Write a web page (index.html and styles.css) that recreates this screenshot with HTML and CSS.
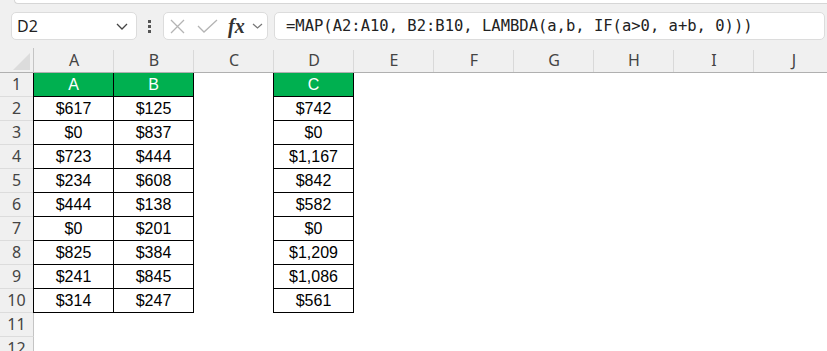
FILE: index.html
```html
<!doctype html>
<html>
<head>
    <meta charset="utf-8">
    <title>MAP LAMBDA</title>
    <link rel="stylesheet" href="styles.css">
</head>
<body>

    <div class="chrome">
        <div class="ribbon-edge"></div>
        <div class="fbar">
            <div class="namebox">
                <span>D2</span>
                <svg width="12" height="7" viewBox="0 0 12 7"><polyline points="1,1 6,6 11,1" fill="none" stroke="#444" stroke-width="1.3"/></svg>
            </div>
            <div class="kebab"><i></i><i></i><i></i></div>
            <div class="fxbox">
                <svg class="ic-x" width="15" height="15" viewBox="0 0 15 15"><path d="M1 1L14 14M14 1L1 14" stroke="#b4b4b4" stroke-width="1.3"/></svg>
                <svg class="ic-ok" width="21" height="14" viewBox="0 0 21 14"><polyline points="1,7 7,13 20,1" fill="none" stroke="#b4b4b4" stroke-width="1.3"/></svg>
                <span class="fx">fx</span>
                <svg class="ic-dd" width="11" height="6" viewBox="0 0 11 6"><polyline points="1,1 5.5,5 10,1" fill="none" stroke="#777" stroke-width="1.2"/></svg>
            </div>
            <div class="formula">=MAP(A2:A10, B2:B10, LAMBDA(a,b, IF(a&gt;0, a+b, 0)))</div>
        </div>
    </div>

    <div class="sheet">
        <div class="hdr">
            <div class="corner"><svg width="33" height="24" viewBox="0 0 33 24"><polygon points="30,5 30,22 13,22" fill="#dcdcdc"/></svg></div>
            <div class="ch">A</div><div class="ch">B</div><div class="ch">C</div><div class="ch">D</div><div class="ch">E</div>
            <div class="ch">F</div><div class="ch">G</div><div class="ch">H</div><div class="ch">I</div><div class="ch">J</div>
        </div>

        <div class="row"><div class="rh">1</div><div class="c b l g">A</div><div class="c b g">B</div><div class="c"></div><div class="c b l g">C</div><div class="fill"></div></div>
        <div class="row"><div class="rh">2</div><div class="c b l">$617</div><div class="c b">$125</div><div class="c"></div><div class="c b l">$742</div><div class="fill"></div></div>
        <div class="row"><div class="rh">3</div><div class="c b l">$0</div><div class="c b">$837</div><div class="c"></div><div class="c b l">$0</div><div class="fill"></div></div>
        <div class="row"><div class="rh">4</div><div class="c b l">$723</div><div class="c b">$444</div><div class="c"></div><div class="c b l">$1,167</div><div class="fill"></div></div>
        <div class="row"><div class="rh">5</div><div class="c b l">$234</div><div class="c b">$608</div><div class="c"></div><div class="c b l">$842</div><div class="fill"></div></div>
        <div class="row"><div class="rh">6</div><div class="c b l">$444</div><div class="c b">$138</div><div class="c"></div><div class="c b l">$582</div><div class="fill"></div></div>
        <div class="row"><div class="rh">7</div><div class="c b l">$0</div><div class="c b">$201</div><div class="c"></div><div class="c b l">$0</div><div class="fill"></div></div>
        <div class="row"><div class="rh">8</div><div class="c b l">$825</div><div class="c b">$384</div><div class="c"></div><div class="c b l">$1,209</div><div class="fill"></div></div>
        <div class="row"><div class="rh">9</div><div class="c b l">$241</div><div class="c b">$845</div><div class="c"></div><div class="c b l">$1,086</div><div class="fill"></div></div>
        <div class="row"><div class="rh">10</div><div class="c b l">$314</div><div class="c b">$247</div><div class="c"></div><div class="c b l">$561</div><div class="fill"></div></div>
        <div class="row"><div class="rh">11</div><div class="fill"></div></div>
        <div class="row"><div class="rh">12</div><div class="fill"></div></div>
    </div>

</body>
</html>
```

FILE: styles.css
```css
* {
    box-sizing: border-box;
}
body {
    margin: 0;
    width: 827px;
    height: 351px;
    overflow: hidden;
    background: #f0f0f0;
    font-family: "Noto Sans", "Liberation Sans", sans-serif;
}

/* formula bar */
.chrome {
    height: 48px;
}
.ribbon-edge {
    height: 4px;
    margin-left: 14px;
    background: #fff;
    border-left: 1px solid #d6d6d6;
    border-bottom: 1px solid #d6d6d6;
    border-bottom-left-radius: 5px;
}
.fbar {
    display: flex;
    align-items: flex-start;
    height: 44px;
    padding: 8px 0 0 11px;
}
.namebox {
    width: 126px;
    height: 28px;
    display: flex;
    align-items: center;
    justify-content: space-between;
    padding: 0 8px 0 5px;
    background: #fff;
    border: 1px solid #dcdcdc;
    border-radius: 5px;
    font-size: 16px;
    color: #222;
}
.kebab {
    width: 3px;
    margin: 8px 0 0 11px;
    display: flex;
    flex-direction: column;
    gap: 2px;
}
.kebab i {
    display: block;
    width: 3px;
    height: 3px;
    background: #555;
}
.fxbox {
    width: 105px;
    height: 28px;
    margin-left: 12px;
    display: flex;
    align-items: center;
    background: #fff;
    border: 1px solid #dcdcdc;
    border-radius: 5px;
}
.ic-x {
    margin-left: 6px;
}
.ic-ok {
    margin-left: 12px;
}
.fx {
    margin-left: 10px;
    font-family: "Liberation Serif", serif;
    font-style: italic;
    font-weight: bold;
    font-size: 20px;
    color: #333;
    line-height: 20px;
}
.ic-dd {
    margin-left: 7px;
}
.formula {
    flex: 1;
    height: 28px;
    margin: 0 2px 0 6px;
    padding-left: 11px;
    background: #fff;
    border: 1px solid #dcdcdc;
    border-radius: 5px;
    font-family: "DejaVu Sans Mono", "Liberation Mono", monospace;
    font-size: 15.5px;
    line-height: 26px;
    color: #222;
    white-space: nowrap;
}

/* grid */
.hdr {
    display: flex;
    height: 25px;
}
.corner {
    width: 34px;
    flex: none;
    border-right: 1px solid #c4c4c4;
    border-bottom: 1px solid #b0b0b0;
}
.corner svg {
    display: block;
}
.ch {
    width: 80px;
    flex: none;
    border-bottom: 1px solid #b0b0b0;
    background: linear-gradient(#d9d9d9, #d9d9d9) right bottom / 1px 22px no-repeat;
    text-align: center;
    line-height: 24px;
    font-size: 16px;
    color: #444;
}
.row {
    display: flex;
    height: 24px;
}
.rh {
    width: 34px;
    flex: none;
    border-right: 1px solid #c4c4c4;
    border-bottom: 1px solid #dcdcdc;
    text-align: center;
    line-height: 23px;
    font-size: 16px;
    color: #444;
}
.c {
    width: 80px;
    flex: none;
    background: #fff;
    text-align: center;
    line-height: 23px;
    font-family: "Liberation Sans", Arial, sans-serif;
    font-size: 16px;
    color: #000;
}
.b {
    border-right: 1px solid #000;
    border-bottom: 1px solid #000;
}
.l {
    box-shadow: -1px 0 0 #000;
}
.g {
    background: #00b050;
    color: #fff;
}
.fill {
    flex: 1;
    background: #fff;
}
```
